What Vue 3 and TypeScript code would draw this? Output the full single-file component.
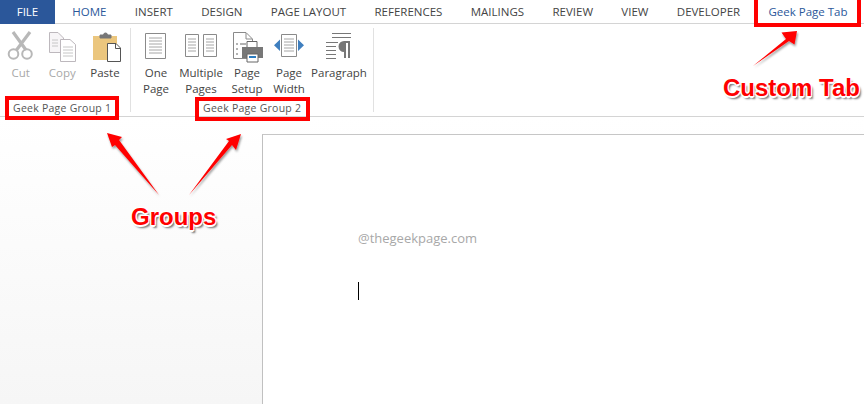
<script setup lang="ts">
const tabs: string[] = ['HOME', 'INSERT', 'DESIGN', 'PAGE LAYOUT', 'REFERENCES', 'MAILINGS', 'REVIEW', 'VIEW', 'DEVELOPER', 'Geek Page Tab']
</script>

<template>
  <div class="app">
    <nav class="tabs">
      <div class="file">FILE</div>
      <div v-for="(t, i) in tabs" :key="t" class="tab" :class="{ active: i === 0 || i === 9 }">{{ t }}</div>
    </nav>

    <section class="ribbon">
      <div class="group g1">
        <div class="buttons">
          <div class="btn w1 off">
            <svg width="42" height="34" viewBox="0 29 42 34">
              <g fill="none" stroke="#b8b8b8">
                <path d="M13 32L26 50M30 32L16.500 50" stroke-width="3.200" />
                <circle cx="13.500" cy="54" r="4.800" stroke-width="2" />
                <circle cx="27" cy="54" r="4.800" stroke-width="2" />
              </g>
            </svg>
            <span>Cut</span>
          </div>
          <div class="btn w2 off">
            <svg width="42" height="34" viewBox="41 29 42 34">
              <path d="M49.500 32.500H58L63.500 38V52.500H49.500Z" fill="#f7f5f7" stroke="#bdb8bd" />
              <path d="M60.500 39.500H70L75.500 44.500V61.500H60.500Z" fill="#fff" stroke="#bdb8bd" />
              <path d="M52 40H58M52 43H58M52 46H58M63 47H73M63 50H73M63 53H73M63 56H73" stroke="#c6c6c6" />
            </svg>
            <span>Copy</span>
          </div>
          <div class="btn w3">
            <svg width="44" height="34" viewBox="83 29 44 34">
              <path d="M93 36H117V60H93Z" fill="#ebc67e" />
              <path d="M100 38V35H103.500A2 2 0 0 1 107.500 35H111V38Z" fill="#777" stroke="#777" />
              <path d="M107.500 43.500H116L120.500 48V61.500H107.500Z" fill="#fff" stroke="#555" />
              <path d="M115.500 43.500V48.500H120.500" fill="none" stroke="#555" />
            </svg>
            <span>Paste</span>
          </div>
        </div>
        <div class="group-label">Geek Page Group 1</div>
      </div>

      <div class="group g2">
        <div class="buttons">
          <div class="btn b1">
            <svg width="40" height="34" viewBox="136 29 40 34">
              <path d="M145.500 33.500H165.500V58.500H145.500Z" fill="#fff" stroke="#8a8a8a" />
              <path d="M149 38H162M149 41H162M149 44H162M149 47H162M149 50H162M149 53H162" stroke="#a6a6a6" />
            </svg>
            <span>One<br />Page</span>
          </div>
          <div class="btn b2">
            <svg width="46" height="34" viewBox="178 29 46 34">
              <path d="M185.500 34.500H198.500V56.500H185.500ZM203.500 34.500H216.500V56.500H203.500Z" fill="#fff" stroke="#8a8a8a" />
              <path d="M188 39H196M188 42H196M188 45H196M188 48H196M188 51H196M206 39H214M206 42H214M206 45H214M206 48H214M206 51H214" stroke="#a6a6a6" />
            </svg>
            <span>Multiple<br />Pages</span>
          </div>
          <div class="btn b3">
            <svg width="42" height="34" viewBox="226 29 42 34">
              <path d="M233.500 32.500H246L252.500 39V58.500H233.500Z" fill="#fff" stroke="#8a8a8a" />
              <path d="M246 33V39H252" fill="none" stroke="#8a8a8a" />
              <path d="M236 44H238M236 49H238M236 54H238M240 44H246" stroke="#999" stroke-width="1.500" />
              <path d="M247 41.500H257V48H247Z" fill="#fff" stroke="#666" />
              <path d="M242 47H263V58H242Z" fill="#777" />
              <path d="M247 54H258V62H247Z" fill="#fff" stroke="#666" />
              <path d="M249 57H256" stroke="#2b7cc0" stroke-width="2" />
            </svg>
            <span>Page<br />Setup</span>
          </div>
          <div class="btn b4">
            <svg width="38" height="34" viewBox="270 29 38 34">
              <path d="M281.500 34.500H296.500V56.500H281.500Z" fill="#fff" stroke="#8a8a8a" />
              <path d="M284 39H294M284 42H294M284 45H294M284 48H294M284 51H294" stroke="#a6a6a6" />
              <path d="M280 39.500V51L274 45.200ZM298 39.500V51L304 45.200Z" fill="#3f7fbf" />
            </svg>
            <span>Page<br />Width</span>
          </div>
          <div class="btn b5">
            <svg width="58" height="34" viewBox="310 29 58 34">
              <path d="M332 33.500H351M332 37.500H351M326 42.500H338M326 46.500H336M326 50.500H336M326 54.500H336M326 58.500H336" stroke="#777" />
              <path d="M348 41H344A5.500 5.500 0 0 0 344 52V58H346V43H348V58H350V41Z" fill="#777" />
            </svg>
            <span>Paragraph</span>
          </div>
        </div>
        <div class="group-label">Geek Page Group 2</div>
      </div>
    </section>

    <main class="workspace">
      <div class="page">
        <div class="watermark">@thegeekpage.com</div>
        <div class="caret"></div>
      </div>
    </main>

    <svg class="marks" width="864" height="404" viewBox="0 0 864 404">
      <defs>
        <filter id="ds" x="-20%" y="-20%" width="150%" height="150%">
          <feDropShadow dx="1" dy="2" stdDeviation="1" flood-color="#000" flood-opacity="0.4" />
        </filter>
      </defs>
      <g fill="none" stroke="#f00" stroke-width="4">
        <rect x="7" y="98" width="110" height="20" />
        <rect x="197" y="99" width="111" height="20" />
        <rect x="756" y="-2" width="103" height="27" />
      </g>
      <g fill="#f00" filter="url(#ds)">
        <path d="M753 66L786 39L781.500 32.500L797 31L794.500 44.500L789 41Z" />
        <path d="M159 195L115 145L112 147L107 133L122 137L119 140Z" />
        <path d="M189 195L232 145L236 150L241 134L226 139L229 141Z" />
      </g>
    </svg>
    <div class="note groups">Groups</div>
    <div class="note custom">Custom Tab</div>
  </div>
</template>

<style scoped>
.app {
  position: relative;
  width: 864px;
  height: 404px;
  overflow: hidden;
  background: #fff;
  display: flex;
  flex-direction: column;
  font-family: "Open Sans", "Noto Sans", sans-serif;
  color: #444;
}
.tabs {
  height: 24px;
  box-sizing: border-box;
  border-bottom: 1px solid #d4d4d4;
  display: flex;
  font-size: 11.500px;
  line-height: 23px;
}
.file {
  width: 55px;
  height: 24px;
  background: #2b579a;
  color: #fff;
  text-align: center;
}
.tab {
  margin-left: 17.350px;
  margin-right: -3px;
  padding: 0 14px 0 0;
  white-space: nowrap;
}
.tab.active {
  color: #2b579a;
}
.ribbon {
  height: 93px;
  box-sizing: border-box;
  border-bottom: 1px solid #d4d4d4;
  display: flex;
  font-size: 11.500px;
  line-height: 16px;
}
.group {
  height: 84px;
  margin-top: 4px;
  display: flex;
  flex-direction: column;
  border-right: 1px solid #e1e1e1;
}
.g1 {
  width: 130px;
}
.g2 {
  width: 243px;
  padding-left: 5px;
  box-sizing: border-box;
}
.buttons {
  display: flex;
  flex: none;
  height: 72px;
}
.g2 .buttons {
  gap: 2px;
}
.btn {
  display: flex;
  flex-direction: column;
  align-items: center;
  text-align: center;
  padding-top: 1px;
  white-space: nowrap;
}
.btn svg {
  display: block;
  margin-bottom: 2px;
}
.off {
  color: #a8a8a8;
}
.w1,
.w2 {
  width: 41.500px;
}
.w3 {
  width: 44px;
}
.b1 {
  width: 40px;
}
.b2 {
  width: 46px;
}
.b3 {
  width: 42px;
}
.b4 {
  width: 38px;
}
.b5 {
  width: 58px;
}
.group-label {
  flex: none;
  font-size: 10.500px;
  line-height: 16px;
  color: #555;
  white-space: nowrap;
  letter-spacing: 0.250px;
}
.g1 .group-label {
  margin: 0 0 -4px 13px;
}
.g2 .group-label {
  margin: 0 0 -4px 67px;
}
.workspace {
  flex: 1;
  padding: 17px 0 0 262px;
  background: linear-gradient(#fff, #f6f6f6);
  display: flex;
  min-height: 0;
}
.page {
  flex: 1;
  background: #fff;
  border-left: 1px solid #c0c0c0;
  border-top: 1px solid #c6c6c6;
  padding: 94px 0 0 95px;
}
.watermark {
  font-size: 13px;
  line-height: 18px;
  color: #a8a8a8;
}
.caret {
  width: 1px;
  height: 18px;
  margin: 35px 0 0 0;
  background: #000;
}
.marks {
  position: absolute;
  left: 0;
  top: 0;
  pointer-events: none;
}
.note {
  position: absolute;
  font-family: "Liberation Sans", Arial, sans-serif;
  font-weight: 700;
  font-size: 24px;
  line-height: 28px;
  color: #f00;
  white-space: nowrap;
  text-shadow: -1px -1px 0 #fff, 1px -1px 0 #fff, -1px 1px 0 #fff, 1px 1px 0 #fff, 0 -1.500px 0 #fff, 0 1.500px 0 #fff, 2px 3px 2px rgba(0, 0, 0, 0.55);
}
.groups {
  left: 131px;
  top: 203px;
}
.custom {
  left: 723px;
  top: 74px;
}
</style>
